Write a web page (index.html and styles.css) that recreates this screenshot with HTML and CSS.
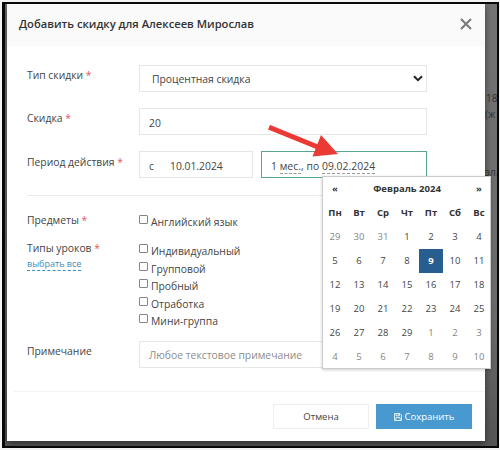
FILE: index.html
```html
<!DOCTYPE html>
<html lang="ru">
<head>
<meta charset="utf-8">
<title>Добавить скидку</title>
<link rel="stylesheet" href="styles.css">
</head>
<body>
<div class="screen">
  <div class="backdrop-text"><span class="t1">18</span><span class="t2">(ж</span><span class="t3">эл.</span></div>
  <div class="modal">
    <header class="modal-head">
      <h1><span>Добавить скидку для Алексеев Мирослав</span></h1>
      <svg class="close" viewBox="0 0 12 12"><path d="M1 1L11 11M11 1L1 11"/></svg>
    </header>
    <main class="modal-body">
      <div class="row type">
        <div class="label"><span>Тип скидки</span> <i>*</i></div>
        <div class="field select"><span>Процентная скидка</span><svg viewBox="0 0 10 7"><path d="M1 1.3L5 5.2L9 1.3"/></svg></div>
      </div>
      <div class="row amount">
        <div class="label"><span>Скидка</span> <i>*</i></div>
        <div class="field"><span>20</span></div>
      </div>
      <div class="row period">
        <div class="label"><span>Период действия</span> <i>*</i></div>
        <div class="dates">
          <div class="field from"><span class="c">с</span><span>10.01.2024</span></div>
          <div class="field to"><span>1 <u>мес.</u>, по <u>09.02.2024</u></span></div>
        </div>
      </div>
      <hr>
      <div class="row subjects">
        <div class="label"><span>Предметы</span> <i>*</i></div>
        <div class="checks"><div class="check"><b></b><span>Английский язык</span></div></div>
      </div>
      <div class="row lessons">
        <div class="label"><span>Типы уроков</span> <i>*</i><div class="all-line"><a class="all">выбрать все</a></div></div>
        <div class="checks">
          <div class="check"><b></b><span>Индивидуальный</span></div>
          <div class="check"><b></b><span>Групповой</span></div>
          <div class="check"><b></b><span>Пробный</span></div>
          <div class="check"><b></b><span>Отработка</span></div>
          <div class="check"><b></b><span>Мини-группа</span></div>
        </div>
      </div>
      <div class="row note">
        <div class="label"><span>Примечание</span></div>
        <div class="field hint"><span>Любое текстовое примечание</span></div>
      </div>
    </main>
    <footer class="modal-foot">
      <div class="btn">Отмена</div>
      <div class="btn primary"><svg viewBox="0 0 10 10"><path d="M.6.6H7.5L9.4 2.5V9.4H.6ZM2.5.8V3.5H6.8V.8M2.3 9.2V5.8H7.7V9.2M5.4 1.2V2.8"/></svg><span>Сохранить</span></div>
    </footer>
  </div>
  <svg class="arrow" viewBox="0 0 72 36"><path d="M2 2.2L52 22.5" stroke="#eb3a34" stroke-width="5"/><path d="M54 10L71 29L45.5 31.5Z" fill="#eb3a34"/></svg>
  <div class="calendar">
    <strong>«</strong><strong class="month">Февраль 2024</strong><strong>»</strong>
    <strong>Пн</strong><strong>Вт</strong><strong>Ср</strong><strong>Чт</strong><strong>Пт</strong><strong>Сб</strong><strong>Вс</strong>
    <em>29</em><em>30</em><em>31</em><span>1</span><span>2</span><span>3</span><span>4</span>
    <span>5</span><span>6</span><span>7</span><span>8</span><span class="active">9</span><span>10</span><span>11</span>
    <span>12</span><span>13</span><span>14</span><span>15</span><span>16</span><span>17</span><span>18</span>
    <span>19</span><span>20</span><span>21</span><span>22</span><span>23</span><span>24</span><span>25</span>
    <span>26</span><span>27</span><span>28</span><span>29</span><em>1</em><em>2</em><em>3</em>
    <em>4</em><em>5</em><em>6</em><em>7</em><em>8</em><em>9</em><em>10</em>
  </div>
</div>
</body>
</html>
```
FILE: styles.css
```css
* { box-sizing: border-box; }
body { margin: 0; padding: 2px 1px 0 2px; width: 500px; height: 450px; overflow: hidden; background: #f4f4f4; font: 10.35px/14px "Open Sans", "Noto Sans", sans-serif; color: #444; }
.screen { position: relative; width: 497px; height: 446px; border: 2px solid #080808; border-left-width: 3px; background: linear-gradient(#747474, #6a6a6a 70%, #555); overflow: hidden; padding-left: 2px; }
.backdrop-text { position: absolute; inset: 0; color: #333; font-size: 10px; }
.backdrop-text span { position: absolute; left: 481px; }
.backdrop-text .t1 { top: 87px; }
.backdrop-text .t2 { left: 480px; top: 103px; }
.backdrop-text .t3 { left: 480px; top: 161px; }
.modal { position: relative; width: 478px; height: 437px; background: #fff; box-shadow: 0 2px 7px rgba(0,0,0,.5); display: flex; flex-direction: column; }
.modal-head { height: 42px; flex: none; padding: 0 13px 3px 12px; background: #fafafa; display: flex; align-items: center; justify-content: space-between; }
h1 { margin: 0; font-size: 11.2px; font-weight: 600; color: #333; white-space: nowrap; }
.close { width: 12px; height: 12px; stroke: #777; stroke-width: 2; fill: none; }
.modal-body { height: 345px; flex: none; padding: 19px 58px 0 20px; }
.row { display: grid; grid-template-columns: 112px 288px; align-items: start; }
.label { padding-top: 3px; white-space: nowrap; }
.label i { color: #e2555d; font-style: normal; margin-left: 0; }
.field { height: 27px; border: 1px solid #e4e6e7; padding: 2px 9px 0; display: flex; align-items: center; white-space: nowrap; background: #fff; }
.select { padding: 1px 3px 0 12px; justify-content: space-between; }
.select svg { width: 10px; height: 7px; fill: none; stroke: #222; stroke-width: 2; margin-top: -2px; }
.amount { margin-top: 16px; }
.period { margin-top: 16px; }
.period .label { padding-top: 4px; }
.dates { display: grid; grid-template-columns: 114px 166px; gap: 8px; }
.from .c { width: 21px; }
.to { border-color: #5ba58c; }
.to span { letter-spacing: .05px; }
u { text-decoration: none; border-bottom: 1px dashed #999; }
hr { height: 1px; border: 0; background: #e9eaeb; margin: 17px -58px 0 0; }
.subjects { margin-top: 14px; }
.subjects .checks { padding-top: 3px; }
.check { height: 17.5px; display: flex; align-items: flex-start; white-space: nowrap; }
.check b { width: 9px; height: 9px; border: 1px solid #858585; border-radius: 1px; margin: 2px 3px 0 0; flex: none; }
.check span { margin-top: 2px; }
.subjects .check { height: 20px; }
.lessons { margin-top: 7px; }
.lessons .label { padding-top: 1px; }
.lessons .checks { padding-top: 2px; }
.all-line { height: 15px; margin-top: 2px; line-height: 13px; }
.all { display: inline-block; font-size: 9px; line-height: 12px; color: #3f8cb9; border-bottom: 1px dashed #3f8cb9; }
.note { margin-top: 11px; }
.hint { color: #8c8c8c; }
.modal-foot { margin-left: 7px; border-top: 1px solid #f3f3f3; height: 50px; padding: 12px 13px 0 0; display: flex; justify-content: flex-end; gap: 7px; }
.btn { width: 96px; height: 25px; border: 1px solid #eee; display: flex; align-items: center; justify-content: center; font-size: 9.5px; }
.primary { background: #4799cf; border-color: #4799cf; color: #fff; gap: 3px; }
.primary svg { width: 8px; height: 8px; fill: none; stroke: #fff; stroke-width: 1; }
.arrow { position: absolute; left: 262px; top: 121px; width: 72px; height: 36px; }
.calendar { position: absolute; left: 317px; top: 172px; width: 169px; height: 193px; background: #fff; border: 1px solid #ccc; box-shadow: 0 1px 3px rgba(0,0,0,.2); display: grid; grid-template-columns: repeat(7, 24px); grid-auto-rows: 24px; font-size: 9.5px; line-height: 23px; text-align: center; }
.calendar strong { color: #333; font-weight: 700; }
.month { grid-column: span 5; }
.calendar em { font-style: normal; color: #858585; }
.calendar .active { background: #275e8f; color: #fff; font-weight: 700; }
```
